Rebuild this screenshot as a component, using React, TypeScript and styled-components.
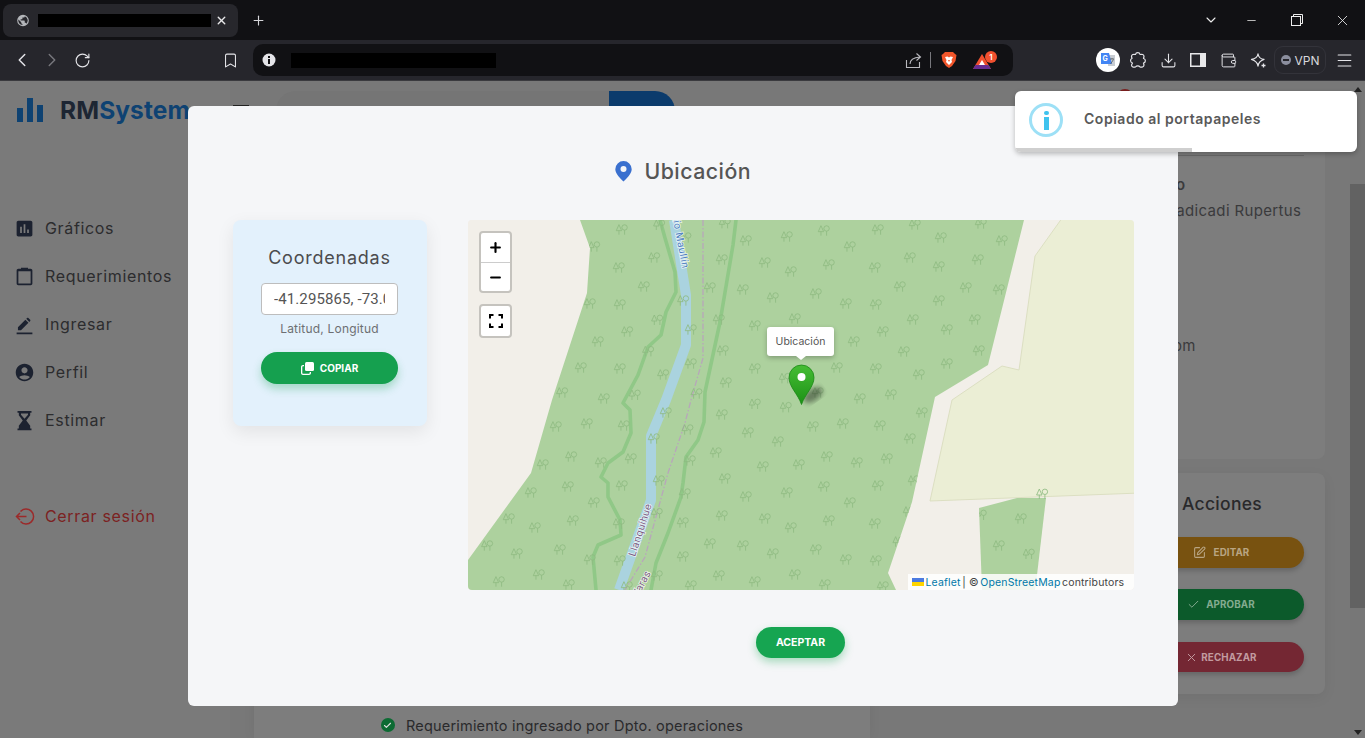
import React from "react";
import styled, { createGlobalStyle } from "styled-components";
import { Bookmark, Check, ChevronDown, ChevronLeft, ChevronRight, Download, Menu, Minus, Plus, RotateCw, SquarePen, Wallet, X } from "lucide-react";

const Global = createGlobalStyle`
  html, body { margin: 0; padding: 0; width: 1365px; height: 738px; overflow: hidden; background: #787878; }
  body { font-family: Inter, "Open Sans", "Liberation Sans", sans-serif; }
  * { box-sizing: border-box; }
`;

const Window = styled.div`
  width: 1365px; height: 738px; display: flex; flex-direction: column; overflow: hidden;
`;
const TabStrip = styled.div`
  height: 40px; background: #111114; display: flex; align-items: center; padding: 0 0 0 3px; color: #e8e8ea; flex: none;
`;
const Tab = styled.div`
  width: 235px; height: 33px; margin-top: 1px; background: #27272c; border-radius: 8px; display: flex; align-items: center; padding: 0 10px 0 13px;
`;
const Redaction = styled.div<{ $w: number; $h: number }>`
  width: ${p => p.$w}px; height: ${p => p.$h}px; background: #000; flex: none;
`;
const TabTitle = styled(Redaction)`
  margin-left: 8px;
`;
const TabClose = styled.span`
  display: flex; margin-left: 4px;
`;
const NewTab = styled.span`
  display: flex; margin-left: 13px; color: #d6d6da;
`;
const WindowControls = styled.div`
  margin-left: auto; display: flex; align-items: center;
`;
const WindowButton = styled.span<{ $w: number }>`
  width: ${p => p.$w}px; display: flex; justify-content: center; color: #eee;
`;
const Toolbar = styled.div`
  height: 41px; background: #26262c; display: flex; align-items: center; padding-left: 7px; color: #e4e4e8; flex: none; border-bottom: 1px solid #3a3a3e;
`;
const ToolButton = styled.span<{ $dim?: boolean }>`
  width: 30px; height: 30px; display: flex; align-items: center; justify-content: center; flex: none; position: relative; color: ${p => (p.$dim ? "#77777c" : "#e4e4e8")};
`;
const BookmarkButton = styled(ToolButton)`
  margin-left: 118px;
`;
const UrlBar = styled.div`
  width: 760px; height: 32px; margin-left: 8px; background: #111114; border-radius: 10px; display: flex; align-items: center; padding: 0 21px 0 9px; flex: none;
`;
const UrlText = styled(Redaction)`
  margin-left: 15px;
`;
const UrlRight = styled.div`
  margin-left: auto; display: flex; align-items: center;
`;
const UrlDivider = styled.span`
  width: 1px; height: 16px; background: #77777c; margin: 0 10px 0 8px;
`;
const Badge = styled.span`
  position: absolute; top: -2px; right: -5px; width: 12px; height: 12px; border-radius: 50%; background: #f1502f; color: #fff; font-size: 8px; font-weight: 600; display: flex; align-items: center; justify-content: center;
`;
const RewardSlot = styled.span`
  position: relative; width: 20px; height: 18px; margin-left: 15px; margin-top: 3px; display: flex;
`;
const TranslateButton = styled(ToolButton)`
  margin-left: 80px;
`;
const VpnPill = styled.div`
  width: 52px; height: 28px; margin-left: 1px; border: 1px solid #33333a; border-radius: 9px; display: flex; align-items: center; justify-content: center; gap: 4px; font-size: 12px; color: #d8d8dc; flex: none;
`;
const VpnDot = styled.span`
  width: 10px; height: 10px; border-radius: 50%; background: #8b8e9e; display: flex; align-items: center; justify-content: center;
  &::after { content: ""; width: 6px; height: 2px; background: #26262c; }
`;
const MenuButton = styled(ToolButton)`
  margin-left: 3px;
`;

const Viewport = styled.div`
  flex: 1; min-height: 0; position: relative; display: flex; background: #787878;
`;
const Sidebar = styled.aside`
  width: 230px; flex: none; background: #7a7a7a; display: flex; flex-direction: column;
`;
const Logo = styled.div`
  height: 58px; display: flex; align-items: center; padding-left: 17px; gap: 17px; font-size: 24.5px; font-weight: 700; letter-spacing: .1px; color: #1d2633; white-space: nowrap;
`;
const LogoAccent = styled.span`
  color: #0e4272;
`;
const Nav = styled.nav`
  margin-top: 65px; display: flex; flex-direction: column;
`;
const NavItem = styled.div<{ $danger?: boolean; $gap?: number }>`
  height: 48px; margin-top: ${p => p.$gap ?? 0}px; padding-left: 14px; display: flex; align-items: center; gap: 10px; font-size: 16px; letter-spacing: .66px; color: ${p => (p.$danger ? "#7c2222" : "#2c2c2e")};
`;
const NavIcon = styled.svg<{ $color?: string }>`
  width: 21px; height: 21px; fill: ${p => p.$color ?? "#1c2230"}; flex: none;
`;
const Main = styled.main`
  flex: 1; min-width: 0; display: flex; flex-direction: column; height: 657px; overflow: hidden;
`;
const Header = styled.header`
  height: 50px; flex: none; display: flex; padding: 10px 0 0 3px;
`;
const Burger = styled.div`
  width: 16px; height: 2px; margin-top: 14px; background: #222;
`;
const SearchBox = styled.div`
  width: 399px; height: 40px; margin-left: 27px; border-radius: 20px; background: #757575; display: flex; overflow: hidden;
`;
const SearchInput = styled.div`
  flex: 1;
`;
const SearchButton = styled.div`
  width: 66px; background: #0b3b6c;
`;
const Avatar = styled.div`
  width: 16px; height: 16px; margin: -2px 0 0 442px; border-radius: 50%; background: #7c2020;
`;
const Columns = styled.div`
  flex: 1; min-height: 0; display: flex;
`;
const HistoryCard = styled.section`
  width: 616px; margin-left: 24px; margin-top: 10px; background: #7d7d7d; display: flex; align-items: flex-end; justify-content: center; padding-bottom: 2px; gap: 11px; font-size: 14.5px; color: #2a2a2c; box-shadow: 0 0 12px rgba(0,0,0,.06);
`;
const HistoryRow = styled.div`
  display: flex; align-items: center; gap: 11px; height: 22px; letter-spacing: .2px; white-space: nowrap;
`;
const CheckDot = styled.span`
  width: 14px; height: 14px; border-radius: 50%; background: #0c6b33; color: #ddd; display: flex; align-items: center; justify-content: center;
`;
const SideColumn = styled.div`
  width: 208px; margin-left: 247px; padding-top: 10px; display: flex; flex-direction: column; gap: 14px;
`;
const InfoCard = styled.section`
  height: 318px; background: #7d7d7d; border-radius: 8px; padding: 14px 21px 0 56px; font-size: 15px; color: #3a3a3c; white-space: nowrap;
`;
const Rule = styled.div`
  height: 1px; margin-left: -56px; background: #696969;
`;
const Detail = styled.div<{ $top: number; $indent: number; $bold?: boolean }>`
  margin-top: ${p => p.$top}px; margin-left: ${p => p.$indent}px; height: 20px; line-height: 20px; font-weight: ${p => (p.$bold ? 600 : 400)}; letter-spacing: .35px;
`;
const ActionsCard = styled.section`
  height: 221px; background: #7d7d7d; border-radius: 8px; padding: 19px 21px 0; display: flex; flex-direction: column; box-shadow: 0 4px 14px rgba(0,0,0,.06);
`;
const ActionsTitle = styled.h3`
  margin: 0 0 21px 44px; height: 24px; line-height: 24px; font-size: 17.5px; font-weight: 500; color: #29292b; letter-spacing: .3px;
`;
const ActionButton = styled.div<{ $bg: string; $gap: number; $fg: string }>`
  height: 31px; margin-bottom: 21.5px; border-radius: 16px; background: ${p => p.$bg}; color: ${p => p.$fg}; display: flex; align-items: center; justify-content: center; gap: ${p => p.$gap}px; font-size: 9.8px; font-weight: 700; letter-spacing: .1px; box-shadow: 0 3px 5px rgba(0,0,0,.18);
`;
const Scrollbar = styled.div`
  width: 15px; flex: none; background: #777; display: flex; flex-direction: column; align-items: center; padding-top: 6px;
`;
const ArrowUp = styled.span`
  width: 0; height: 0; border: 4px solid transparent; border-top: 0; border-bottom: 5px solid #222;
`;
const ScrollThumb = styled.div`
  width: 15px; height: 424px; margin-top: 92px; background: #626262;
`;
const ArrowDown = styled.span`
  width: 0; height: 0; margin-top: 122px; border: 4px solid transparent; border-bottom: 0; border-top: 5px solid #222;
`;

const Scrim = styled.div`
  position: absolute; inset: 0; display: flex; justify-content: center; align-items: flex-start; padding: 25px 0 0 1px;
`;
const Modal = styled.div`
  width: 990px; height: 600px; background: #f5f6f8; border-radius: 6px; padding: 45px 44px 0 44.5px; display: flex; flex-direction: column;
`;
const ModalTitle = styled.h2`
  margin: 0 0 29px; height: 40px; display: flex; align-items: center; justify-content: center; gap: 12px; font-size: 21.3px; font-weight: 500; color: #555; letter-spacing: .5px;
`;
const ModalBody = styled.div`
  display: flex; gap: 41.5px; align-items: flex-start;
`;
const CoordCard = styled.section`
  width: 194px; height: 206px; background: #e3f1fc; border-radius: 8px; padding: 26px 28px 0; display: flex; flex-direction: column; align-items: center; box-shadow: 0 6px 18px rgba(0,0,0,.08);
`;
const CoordTitle = styled.h3`
  margin: 0 0 13px; height: 24px; line-height: 24px; font-size: 18px; font-weight: 400; color: #4c4c4e; letter-spacing: .77px; white-space: nowrap;
`;
const CoordInput = styled.input`
  width: 137px; height: 32px; border: 1px solid #bdbdbd; border-radius: 4px; background: #fff; padding: 0 12px; font: 400 15px Roboto, sans-serif; letter-spacing: .1px; color: #555; outline: none;
`;
const CoordHint = styled.div`
  margin-top: 6px; height: 16px; line-height: 16px; font-size: 12px; color: #6d6f72; letter-spacing: .2px;
`;
const CopyButton = styled.button`
  width: 137px; height: 32px; margin-top: 15px; border: 0; border-radius: 16px; background: #15a04f; color: #fff; display: flex; align-items: center; justify-content: center; gap: 6px; font: 700 10px Inter, sans-serif; box-shadow: 0 5px 9px rgba(21,160,79,.3);
`;
const MapColumn = styled.div`
  width: 666px; display: flex; flex-direction: column; align-items: center;
`;
const MapFrame = styled.div`
  width: 666px; height: 370px; position: relative; overflow: hidden; border-radius: 4px; background: #f2efe9;
`;
const MapCanvas = styled.svg`
  display: block; width: 666px; height: 370px;
`;
const ZoomControl = styled.div`
  position: absolute; left: 11px; top: 11px; width: 33px; border: 2px solid #c5c3be; border-radius: 4px; background: #fff; overflow: hidden;
`;
const ZoomButton = styled.div<{ $divider?: boolean }>`
  height: 29px; display: flex; align-items: center; justify-content: center; color: #000; border-top: ${p => (p.$divider ? "1px solid #ccc" : "0")};
`;
const FullscreenControl = styled.div`
  position: absolute; left: 11px; top: 84px; width: 33px; height: 34px; border: 2px solid #c5c3be; border-radius: 4px; background: #fff; display: flex; align-items: center; justify-content: center;
`;
const Popup = styled.div`
  position: absolute; left: 299px; top: 107px; width: 67px; height: 29px; background: #fff; border-radius: 3px; display: flex; align-items: center; justify-content: center; font-size: 10.5px; color: #555; box-shadow: 0 2px 5px rgba(0,0,0,.25);
  &::after { content: ""; position: absolute; left: 29px; bottom: -4px; width: 0; height: 0; border: 5px solid transparent; border-top: 4px solid #fff; border-bottom: 0; }
`;
const Attribution = styled.div`
  position: absolute; right: 0; bottom: 0; width: 226px; height: 16px; background: rgba(255,255,255,.85); display: flex; align-items: center; padding-left: 4px; gap: 1.5px; font-size: 10.5px; color: #444; white-space: nowrap; letter-spacing: .16px;
`;
const AttributionLink = styled.span`
  color: #0078a8;
`;
const AcceptButton = styled.button`
  width: 89px; height: 31px; margin: 37px 1px 0 0; border: 0; border-radius: 16px; background: #16a551; color: #fff; font: 700 10.5px Inter, sans-serif; box-shadow: 0 4px 8px rgba(22,165,81,.35);
`;

const Toast = styled.div`
  position: absolute; left: 1015px; top: 10px; width: 342px; height: 61px; background: #fff; border-radius: 6px; display: flex; align-items: center; padding-left: 14px; overflow: hidden; box-shadow: 0 2px 5px rgba(0,0,0,.25);
`;
const ToastIcon = styled.div`
  width: 34px; height: 34px; margin-bottom: 3px; border: 3px solid #9de0f6; border-radius: 50%; display: flex; flex-direction: column; align-items: center; justify-content: center; gap: 2px; flex: none;
`;
const ToastDot = styled.span`
  width: 5px; height: 4px; background: #3fc3ee; border-radius: 2px;
`;
const ToastStem = styled.span`
  width: 5px; height: 13px; background: #3fc3ee;
`;
const ToastText = styled.div`
  margin: 0 0 6px 21px; font-size: 14px; font-weight: 600; color: #595959; letter-spacing: .52px;
`;
const ToastProgress = styled.div`
  position: absolute; left: 0; bottom: 0; width: 177px; height: 4px; background: #cfcfcf;
`;

const sets: [number, number, number[][]][] = [
  [468, 215, [[461,44],[378,95],[573,30],[652,68],[558,128],[452,158],[527,215],[365,266],[455,269],[645,257],[567,315],[477,350],[389,380],[668,344],[540,409],[338,458],[455,461],[668,446],[585,479],[282,533],[407,551],[500,540],[685,536],[770,25],[833,77],[956,65],[761,134],[890,143],[968,170],[725,218],[824,224],[914,248],[752,314],[860,332],[980,311],[764,407],[860,461],[950,490],[773,503]]],
  [468, 400, [[593,38],[860,12],[953,22],[263,80],[356,71],[467,77],[658,89],[761,44],[839,98],[929,125],[557,116],[743,158],[309,170],[398,188],[488,176],[665,182],[224,194],[884,200],[992,194],[572,242],[770,236],[461,257],[299,260],[188,278],[650,281],[956,278],[833,290],[377,308],[566,340],[761,347],[122,356],[314,362],[452,371],[644,368],[890,356],[968,383],[200,383],[725,431],[824,437],[914,461],[57,437],[146,461],[275,449],[365,479],[455,482],[644,470],[92,545],[212,524],[302,554],[476,560],[566,527],[752,527],[668,557],[860,545],[980,524]]],
  [810, 215, [[41,47],[203,44],[314,29],[512,26],[392,68],[575,77],[119,95],[299,128],[503,134],[56,149],[194,158],[386,155],[269,215],[467,218],[566,224],[17,236],[107,266],[197,269],[386,257],[308,314],[494,314],[410,344],[218,350],[131,380],[506,407],[281,410],[410,446],[80,458],[197,461],[326,479],[149,551],[242,539],[23,533],[335,593],[98,626],[209,632],[8,635],[299,671],[50,725],[140,743],[230,731],[41,815],[203,812],[311,797],[119,863],[56,917],[194,926],[296,890],[17,1004],[107,1034],[197,1037],[265,980],[44,1109],[218,1115],[632,911],[566,992],[656,1017],[512,900]]],
];
const trees = sets.flatMap(([ox, oy, list]) => list.map(([x, y]) => [ox + x / 3, oy + y / 3]));

const forestMain = "580,220 590,248 587,293 552,400 531,473 468,560 468,590 896,590 888,573 912,502 935,397 988,365 1024,220";
const forestSmall = "979,508 1017,498 1046,498 1037,575 1035,590 982,590";

const MapDrawing = () => (
  <MapCanvas viewBox="468 220 666 370">
    <defs>
      <g id="tree" fill="none" stroke="#8fbb82" strokeWidth="0.85">
        <path d="M-2.700 -5 L-5.400 1 H0 Z M-2.700 1 V5" />
        <circle cx="2.900" cy="-2.200" r="2.700" />
        <path d="M2.900 0.500 V5" />
      </g>
      <clipPath id="forestClip">
        <polygon points={forestMain} />
        <polygon points={forestSmall} />
      </clipPath>
      <linearGradient id="pinFill" x1="0" y1="0" x2="0" y2="1">
        <stop offset="0" stopColor="#46bd34" />
        <stop offset="1" stopColor="#1c9216" />
      </linearGradient>
      <filter id="pinShadow"><feGaussianBlur stdDeviation="2.400" /></filter>
    </defs>
    <rect x="468" y="220" width="666" height="370" fill="#f2efe9" />
    <polygon fill="#add19e" points={forestMain} />
    <polygon fill="#ebeed5" stroke="#dcdfc2" points="1065,214 1035,256 1019,370 1002,366 952,400 930,501 1140,493 1140,214" />
    <polygon fill="#add19e" points={forestSmall} />
    <polyline fill="none" stroke="#aad3df" strokeWidth="10" strokeLinejoin="round" points="674,220 682,270 686,295 686,345 666,400 651,436 651,500 619,590" />
    <g fill="none" stroke="#90c887" strokeWidth="3.600" strokeLinejoin="round" strokeLinecap="round">
      <polyline points="660,220 665,238 675,272 676,292 666,312 661,335 648,347 638,375 623,403 630,410 631,433 623,452 608,463 601,477 608,483 608,497 620,520 621,535 598,545 593,557 596,590" />
      <polyline points="736,220 733,245 720,322 705,392 704,422 698,440 686,457 683,483 681,497 668,533 656,563 651,590" />
    </g>
    <polyline fill="none" stroke="#b8a6bb" strokeWidth="1.300" strokeDasharray="6 2 1.500 2" points="703,220 703,358 691,400 685,423 668,473 645,557 625,590" />
    <g clipPath="url(#forestClip)">
      {trees.map(([x, y], i) => <use key={i} href="#tree" x={x} y={y} />)}
    </g>
    <use href="#tree" x={1042} y={494} />
    <g fontFamily="Inter, sans-serif" fontSize="10" stroke="#ffffff" strokeOpacity=".75" strokeWidth="1.600" style={{ paintOrder: "stroke" }}>
      <text transform="translate(682.500 269) rotate(79)" fill="#4a7cc0" textAnchor="end" letterSpacing=".4">Río Maullín</text>
      <text transform="translate(635 557) rotate(-72)" fill="#7c5e85" letterSpacing=".3">Llanquihue</text>
      <text transform="translate(651 573) rotate(-62)" fill="#7c5e85" textAnchor="end" letterSpacing=".3">Varas</text>
    </g>
    <ellipse cx="813" cy="395" rx="11" ry="6" fill="#000" opacity=".4" filter="url(#pinShadow)" transform="rotate(-35 813 395)" />
    <path d="M801.500 404.500 C798 394 789 387 789 377.500 A12.500 12.500 0 0 1 814 377.500 C814 387 805 394 801.500 404.500 Z" fill="url(#pinFill)" stroke="#1a8616" strokeWidth=".8" />
    <circle cx="801.500" cy="377" r="4" fill="#fff" />
  </MapCanvas>
);

const BraveIcon = () => (
  <svg width="16" height="18" viewBox="0 0 16 18">
    <path d="M4 1 H12 L14 3 L15.500 4 L14.500 10 L11 15 L8 17 L5 15 L1.500 10 L.500 4 L2 3 Z" fill="#f1562b" />
    <path d="M4 6 L6.500 5.500 L8 6.500 L9.500 5.500 L12 6 L10.500 9 L11 11 L8 14 L5 11 L5.500 9 Z" fill="#fff" />
    <path d="M7 9 H9 L8 11 Z" fill="#f1562b" />
  </svg>
);
const RewardIcon = () => (
  <svg width="20" height="18" viewBox="0 0 20 18">
    <path d="M10 1 L19 16 H1 Z" fill="#f1502f" />
    <path d="M1 16 H19 L16.500 12 H3.500 Z" fill="#662d91" />
    <path d="M10 7 L13 12 H7 Z" fill="#fff" />
  </svg>
);
const TranslateIcon = () => (
  <svg width="24" height="24" viewBox="0 0 24 24">
    <circle cx="12" cy="12" r="12" fill="#fff" />
    <path d="M12 7 H19 V18 H12 Z" fill="#c8ccd2" />
    <path d="M5 5 H13 L16 16 H5 Z" fill="#4285f4" />
    <text x="6.500" y="13" fontSize="7" fontWeight="700" fill="#fff" fontFamily="Inter, sans-serif">G</text>
    <path d="M14 11 H18 M16 10 V11 M14.500 16 L17.500 11.500" stroke="#5f6368" strokeWidth=".9" fill="none" />
  </svg>
);
const PuzzleIcon = () => (
  <svg width="18" height="18" viewBox="0 0 18 18" fill="none" stroke="currentColor" strokeWidth="1.200" strokeLinejoin="round">
    <path d="M6.500 3.500 C7 1 10.500 1 11 3.500 C13 3 15 3.500 15 5.500 L14.500 7.500 C17 8 17 11.500 14.500 12 L15 14 C15 16 12.500 16.500 11 16 C10 14.500 7.500 14.500 6.500 16 C4.500 16.500 2.500 16 2.500 14 L3.500 12 C1 11.500 1 8 3 7.500 L2.500 5.500 C2.500 3.500 4.500 3 6.500 3.500 Z" />
  </svg>
);
const ShareIcon = () => (
  <svg width="17" height="17" viewBox="0 0 17 17" fill="none" stroke="#b9b9be" strokeWidth="1.100">
    <path d="M1.500 8 V15.500 H14.500 V10" />
    <path d="M5 12 C5 8 8 5.500 15 5 M11.500 1.500 L15.500 5 L11.500 8.500" />
  </svg>
);
const SidebarIcon = () => (
  <svg width="16" height="14" viewBox="0 0 16 14">
    <rect x=".750" y=".750" width="14.500" height="12.500" fill="none" stroke="#e8e8ea" strokeWidth="1.500" />
    <rect x="10" y="1" width="5" height="12" fill="#e8e8ea" />
  </svg>
);
const LeoIcon = () => (
  <svg width="18" height="18" viewBox="0 0 18 18" fill="none" stroke="currentColor" strokeWidth="1.300" strokeLinejoin="round">
    <path d="M8 2 C8.500 5 10.500 7 14 7.500 C10.500 8.500 8.500 10.500 8 14 C7.500 10.500 5 8.500 1.500 7.500 C5 7 7.500 5 8 2 Z" transform="translate(1 1)" />
    <path d="M14.500 12.500 V16.500 M12.500 14.500 H16.500" />
  </svg>
);
const GlobeIcon = () => (
  <svg width="15" height="15" viewBox="0 0 24 24">
    <path fill="#b4b6ba" d="M12 2a10 10 0 1 0 0 20 10 10 0 0 0 0-20zm-1 17.900A8 8 0 0 1 4.200 10.200L9 15v1c0 1.100.9 2 2 2v1.900zm6.900-2.500c-.3-.8-1-1.400-1.900-1.400h-1v-3c0-.6-.4-1-1-1H8v-2h2c.6 0 1-.4 1-1V7h2c1.100 0 2-.9 2-2v-.4a8 8 0 0 1 2.900 12.800z" />
  </svg>
);
const RestoreIcon = () => (
  <svg width="12" height="12" viewBox="0 0 12 12" fill="none" stroke="currentColor" strokeWidth="1">
    <rect x=".500" y="2.500" width="9" height="9" />
    <path d="M2.500 2.500 V.500 H11.500 V9.500 H9.500" />
  </svg>
);
const CopyIcon = () => (
  <svg width="13" height="13" viewBox="0 0 13 13" fill="#fff">
    <rect x="4" y="0" width="9" height="9" rx="1.500" />
    <path d="M2.500 3 V3 H3 V4.300 H2 C1.600 4.300 1.300 4.600 1.300 5 V11 C1.300 11.400 1.600 11.700 2 11.700 H8 C8.400 11.700 8.700 11.400 8.700 11 V10 H10 V11 C10 12.100 9.100 13 8 13 H2 C.900 13 0 12.100 0 11 V5 C0 3.900 .900 3 2 3 Z" />
  </svg>
);

export default function App() {
  return (
    <Window>
      <Global />
      <TabStrip>
        <Tab>
          <GlobeIcon />
          <TabTitle $w={173} $h={13} />
          <TabClose><X size={13} strokeWidth={2.600} /></TabClose>
        </Tab>
        <NewTab><Plus size={15} strokeWidth={1.800} /></NewTab>
        <WindowControls>
          <WindowButton $w={34}><ChevronDown size={16} strokeWidth={1.600} /></WindowButton>
          <WindowButton $w={46}><Minus size={13} strokeWidth={1.400} /></WindowButton>
          <WindowButton $w={46}><RestoreIcon /></WindowButton>
          <WindowButton $w={45}><X size={17} strokeWidth={1.200} /></WindowButton>
        </WindowControls>
      </TabStrip>
      <Toolbar>
        <ToolButton><ChevronLeft size={22} strokeWidth={1.600} /></ToolButton>
        <ToolButton $dim><ChevronRight size={22} strokeWidth={1.600} /></ToolButton>
        <ToolButton><RotateCw size={17} strokeWidth={1.600} /></ToolButton>
        <BookmarkButton><Bookmark size={17} strokeWidth={1.500} /></BookmarkButton>
        <UrlBar>
          <svg width="14" height="14" viewBox="0 0 14 14">
            <circle cx="7" cy="7" r="6.500" fill="#e4e4e8" />
            <rect x="6" y="6" width="2" height="5" fill="#111114" />
            <rect x="6" y="3" width="2" height="2" fill="#111114" />
          </svg>
          <UrlText $w={205} $h={15} />
          <UrlRight>
            <ShareIcon />
            <UrlDivider />
            <BraveIcon />
            <RewardSlot><RewardIcon /><Badge>1</Badge></RewardSlot>
          </UrlRight>
        </UrlBar>
        <TranslateButton><TranslateIcon /></TranslateButton>
        <ToolButton><PuzzleIcon /></ToolButton>
        <ToolButton><Download size={17} strokeWidth={1.500} /></ToolButton>
        <ToolButton><SidebarIcon /></ToolButton>
        <ToolButton><Wallet size={17} strokeWidth={1.400} /></ToolButton>
        <ToolButton><LeoIcon /></ToolButton>
        <VpnPill><VpnDot />VPN</VpnPill>
        <MenuButton><Menu size={19} strokeWidth={1.400} /></MenuButton>
      </Toolbar>
      <Viewport>
        <Sidebar>
          <Logo>
            <svg width="26" height="24" viewBox="0 0 26 24" fill="#0e4272">
              <rect x="0" y="10" width="6" height="14" />
              <rect x="10" y="0" width="6" height="24" />
              <rect x="20" y="7" width="6" height="17" />
            </svg>
            <span>RM<LogoAccent>System</LogoAccent></span>
          </Logo>
          <Nav>
            <NavItem><NavIcon viewBox="0 0 24 24"><path d="M19 3H5c-1.100 0-2 .9-2 2v14c0 1.100.9 2 2 2h14c1.100 0 2-.9 2-2V5c0-1.100-.9-2-2-2zM9 17H7v-7h2v7zm4 0h-2V7h2v10zm4 0h-2v-4h2v4z" /></NavIcon>Gráficos</NavItem>
            <NavItem><NavIcon viewBox="0 0 24 24"><path d="M19 3h-3V2H8v1H5c-1.100 0-2 .9-2 2v15c0 1.100.9 2 2 2h14c1.100 0 2-.9 2-2V5c0-1.100-.9-2-2-2zm0 17H5V6h14v14z" /></NavIcon>Requerimientos</NavItem>
            <NavItem><NavIcon viewBox="0 0 24 24"><path d="M21 23H3v-2h18v2zM13 6.500l3.500 3.500L8 18.500H4.500V15L13 6.500zM15 4.500c.4-.4 1-.4 1.400 0l2.100 2.100c.4.4.4 1 0 1.400l-1 1-3.500-3.500 1-1z" /></NavIcon>Ingresar</NavItem>
            <NavItem><NavIcon viewBox="0 0 24 24"><path d="M12 2C6.480 2 2 6.480 2 12s4.480 10 10 10 10-4.480 10-10S17.520 2 12 2zm0 4c1.930 0 3.500 1.570 3.500 3.500S13.930 13 12 13s-3.500-1.570-3.500-3.500S10.070 6 12 6zm0 14c-2.030 0-4.430-.82-6.140-2.880C7.550 15.800 9.680 15 12 15s4.450.8 6.140 2.120C16.430 19.180 14.030 20 12 20z" /></NavIcon>Perfil</NavItem>
            <NavItem><NavIcon viewBox="0 0 24 24"><path fillRule="evenodd" d="M4 1h16v2h-1.500v3L14 12l4.500 6v3H20v2H4v-2h1.500v-3L10 12 5.500 6V3H4V1zm4 3v1.500L12 10l4-4.500V4H8z" /></NavIcon>Estimar</NavItem>
            <NavItem $danger $gap={48}>
              <svg width="21" height="21" viewBox="-1.500 -1.500 21 21" fill="none" stroke="#9c2a2a" strokeWidth="1.500">
                <path d="M5 4 A7.500 7.500 0 1 1 5 14" />
                <path d="M11 9 H1 M4.500 5.500 L1 9 L4.500 12.500" />
              </svg>
              Cerrar sesión
            </NavItem>
          </Nav>
        </Sidebar>
        <Main>
          <Header>
            <Burger />
            <SearchBox>
              <SearchInput />
              <SearchButton />
            </SearchBox>
            <Avatar />
          </Header>
          <Columns>
            <HistoryCard>
              <HistoryRow>
                <CheckDot><Check size={9} strokeWidth={3} /></CheckDot>
                Requerimiento ingresado por Dpto. operaciones
              </HistoryRow>
            </HistoryCard>
            <SideColumn>
              <InfoCard>
                <Rule />
                <Detail $top={19} $indent={3} $bold>o</Detail>
                <Detail $top={6} $indent={-6}>nadicadi Rupertus</Detail>
                <Detail $top={115} $indent={0}>om</Detail>
              </InfoCard>
              <ActionsCard>
                <ActionsTitle>Acciones</ActionsTitle>
                <ActionButton $bg="#785210" $fg="#b9a583" $gap={8}><SquarePen size={13} strokeWidth={2} />EDITAR</ActionButton>
                <ActionButton $bg="#0c5a2b" $fg="#84ab90" $gap={6}><Check size={13} strokeWidth={1.800} />APROBAR</ActionButton>
                <ActionButton $bg="#742733" $fg="#c29ba0" $gap={3}><X size={13} strokeWidth={1.800} />RECHAZAR</ActionButton>
              </ActionsCard>
            </SideColumn>
          </Columns>
        </Main>
        <Scrollbar>
          <ArrowUp />
          <ScrollThumb />
          <ArrowDown />
        </Scrollbar>
        <Scrim>
          <Modal>
            <ModalTitle>
              <svg width="17" height="21" viewBox="0 0 17 21">
                <path d="M8.500 0 A8.200 8.200 0 0 1 16.700 8.200 C16.700 13 11 18 8.500 20.500 C6 18 .300 13 .300 8.200 A8.200 8.200 0 0 1 8.500 0 Z" fill="#3a70cf" />
                <circle cx="8.500" cy="8" r="3" fill="#f5f6f8" />
              </svg>
              Ubicación
            </ModalTitle>
            <ModalBody>
              <CoordCard>
                <CoordTitle>Coordenadas</CoordTitle>
                <CoordInput readOnly value="-41.295865, -73.082431" />
                <CoordHint>Latitud, Longitud</CoordHint>
                <CopyButton><CopyIcon />COPIAR</CopyButton>
              </CoordCard>
              <MapColumn>
                <MapFrame>
                  <MapDrawing />
                  <ZoomControl>
                    <ZoomButton><Plus size={15} strokeWidth={3.400} /></ZoomButton>
                    <ZoomButton $divider><Minus size={15} strokeWidth={3.400} /></ZoomButton>
                  </ZoomControl>
                  <FullscreenControl>
                    <svg width="14" height="14" viewBox="0 0 14 14" fill="none" stroke="#000" strokeWidth="2">
                      <path d="M1 4.500 V1 H4.500 M9.500 1 H13 V4.500 M13 9.500 V13 H9.500 M4.500 13 H1 V9.500" />
                    </svg>
                  </FullscreenControl>
                  <Popup>Ubicación</Popup>
                  <Attribution>
                    <svg width="12" height="8" viewBox="0 0 12 8"><rect width="12" height="4" fill="#4c7be1" /><rect y="4" width="12" height="4" fill="#ffd500" /></svg>
                    <AttributionLink>Leaflet</AttributionLink> | © <AttributionLink>OpenStreetMap</AttributionLink> contributors
                  </Attribution>
                </MapFrame>
                <AcceptButton>ACEPTAR</AcceptButton>
              </MapColumn>
            </ModalBody>
          </Modal>
        </Scrim>
        <Toast>
          <ToastIcon><ToastDot /><ToastStem /></ToastIcon>
          <ToastText>Copiado al portapapeles</ToastText>
          <ToastProgress />
        </Toast>
      </Viewport>
    </Window>
  );
}
